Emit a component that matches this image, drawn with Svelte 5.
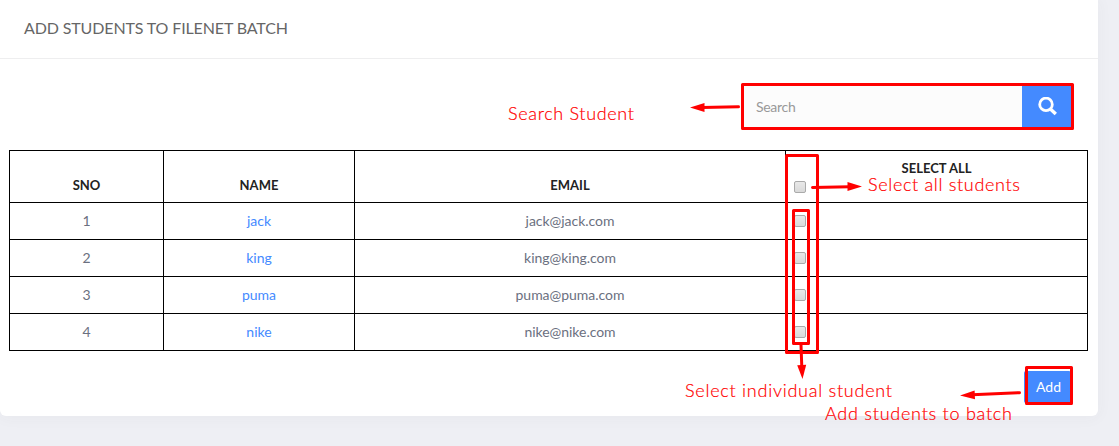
<script>
  const students = [
    { id: 1, name: 'jack', email: 'jack@jack.com' },
    { id: 2, name: 'king', email: 'king@king.com' },
    { id: 3, name: 'puma', email: 'puma@puma.com' },
    { id: 4, name: 'nike', email: 'nike@nike.com' }
  ];
</script>

<main>
  <section class="card">
    <header><h1>ADD STUDENTS TO FILENET BATCH</h1></header>
    <form class="search">
      <input type="text" placeholder="Search" />
      <button type="button" aria-label="Search">
        <svg width="19" height="19" viewBox="0 0 19 19" fill="none" stroke="#fff">
          <circle cx="8" cy="7.4" r="6.3" stroke-width="2.8" />
          <path d="M12.4 11.9L17.8 17" stroke-width="3.4" />
        </svg>
      </button>
    </form>
    <table>
      <colgroup><col class="c1" /><col class="c2" /><col class="c3" /><col class="c4" /></colgroup>
      <thead>
        <tr>
          <th>SNO</th>
          <th>NAME</th>
          <th>EMAIL</th>
          <th class="all"><div>SELECT ALL</div><input type="checkbox" aria-label="Select all" /></th>
        </tr>
      </thead>
      <tbody>
        {#each students as s}
          <tr>
            <td>{s.id}</td>
            <td class="name">{s.name}</td>
            <td class="email">{s.email}</td>
            <td class="pick"><input type="checkbox" aria-label={s.name} /></td>
          </tr>
        {/each}
      </tbody>
    </table>
    <footer><button type="button">Add</button></footer>
  </section>

  <svg class="notes" width="1119" height="446" viewBox="0 0 1119 446">
    <g fill="none" stroke="#f00" stroke-width="3" stroke-linejoin="round">
      <rect x="742.5" y="84.5" width="330" height="44" />
      <rect x="786.5" y="155.5" width="31" height="197" />
      <rect x="793.5" y="210.5" width="15" height="133" />
      <rect x="1026.5" y="367.5" width="45" height="36" />
      <g stroke-linecap="round">
        <path d="M738.5 106.7L702 107.4" />
        <path d="M812.5 187.5L850 186.8" />
        <path d="M801 345L801.8 367" />
        <path d="M1019.5 392.7L972 394.8" />
      </g>
    </g>
    <g fill="#f00">
      <path d="M690 107.5L704.5 103V112Z" />
      <path d="M862 186.6L847.5 182V191Z" />
      <path d="M802.5 379L797.2 365.2L806.2 364.8Z" />
      <path d="M960 395.5L974.6 390.4L975 399.2Z" />
      <text x="508" y="120" textLength="126">Search Student</text>
      <text x="868" y="191" textLength="152">Select all students</text>
      <text x="685" y="397" textLength="207">Select individual student</text>
      <text x="825" y="420" textLength="187">Add students to batch</text>
    </g>
  </svg>
</main>

<style>
  :global(body) { background: #eeeff4; }
  main {
    position: relative;
    height: 446px;
    overflow: hidden;
    font: 14px/20px Lato, sans-serif;
    color: #6b7080;
  }
  .card {
    box-sizing: border-box;
    width: 1098px;
    height: 416px;
    background: #fff;
    border-radius: 0 0 6px 6px;
    box-shadow: 0 1px 15px 1px rgba(69, 65, 78, .04);
  }
  header {
    box-sizing: border-box;
    height: 59px;
    padding: 18px 24px;
    border-bottom: 1px solid #eeeeef;
  }
  h1 { margin: 0; font-size: 16px; font-weight: 400; letter-spacing: -.13px; color: #666; }
  .search {
    display: flex;
    width: 329px;
    height: 43px;
    margin: 26px 0 22px 743px;
  }
  .search input {
    box-sizing: border-box;
    flex: 1;
    min-width: 0;
    padding: 0 13px;
    border: 0;
    background: #fcfcfc;
    font: 14px Lato, sans-serif;
    letter-spacing: -.3px;
  }
  .search input::placeholder { color: #999; opacity: 1; }
  button { border: 0; padding: 0; background: #448aff; color: #fff; font: 14px/20px Lato, sans-serif; }
  .search button { width: 50px; display: flex; align-items: center; justify-content: center; }
  table {
    width: 1079px;
    margin-left: 9px;
    table-layout: fixed;
    border-collapse: collapse;
  }
  .c1 { width: 154px; }
  .c2 { width: 191px; }
  .c3 { width: 431px; }
  .c4 { width: 302px; }
  th, td { box-sizing: border-box; border: 1px solid #000; text-align: center; padding: 0 8px; }
  th { height: 52px; padding-bottom: 7px; vertical-align: bottom; font-size: 13px; font-weight: 700; color: #222; }
  td { height: 37px; }
  .name { color: #448aff; }
  .email { letter-spacing: -.03px; }
  th.all { padding-bottom: 9px; }
  .all div { height: 14px; line-height: 14px; margin-bottom: 6px; }
  .pick { text-align: left; }
  table input {
    appearance: none;
    display: block;
    box-sizing: border-box;
    width: 12px;
    height: 12px;
    margin: 0;
    border: 1px solid #aaa;
    border-radius: 2px;
    background: linear-gradient(#e8e8e8, #d9d9d9);
  }
  footer { display: flex; justify-content: flex-end; padding: 20px 27px 0 0; }
  footer button { width: 47px; height: 32px; padding-left: 2px; border-radius: 2px; }
  .notes { position: absolute; left: 0; top: 0; pointer-events: none; }
  .notes text { font: 300 18px Lato, sans-serif; stroke: #f00; stroke-width: .2px; }
</style>
